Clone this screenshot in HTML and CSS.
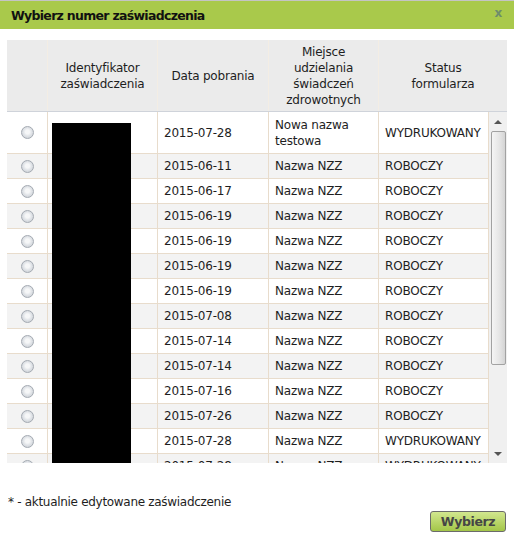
FILE: index.html
```html
<!DOCTYPE html>
<html lang="pl">
<head>
<meta charset="utf-8">
<title>Wybierz numer zaświadczenia</title>
<link rel="stylesheet" href="styles.css">
</head>
<body>
<div class="dialog">
  <div class="titlebar">
    <span class="title">Wybierz numer zaświadczenia</span>
    <span class="close">x</span>
  </div>
  <div class="content">
    <div class="head">
      <div class="h"></div>
      <div class="h">Identyfikator<br>zaświadczenia</div>
      <div class="h">Data pobrania</div>
      <div class="h">Miejsce<br>udzielania<br>świadczeń<br>zdrowotnych</div>
      <div class="h">Status<br>formularza</div>
    </div>
    <div class="body">
      <div class="clip">
        <div class="row first"><div><span class="radio"></span></div><div></div><div>2015-07-28</div><div>Nowa nazwa<br>testowa</div><div>WYDRUKOWANY</div></div>
        <div class="row alt"><div><span class="radio"></span></div><div></div><div>2015-06-11</div><div>Nazwa NZZ</div><div>ROBOCZY</div></div>
        <div class="row"><div><span class="radio"></span></div><div></div><div>2015-06-17</div><div>Nazwa NZZ</div><div>ROBOCZY</div></div>
        <div class="row alt"><div><span class="radio"></span></div><div></div><div>2015-06-19</div><div>Nazwa NZZ</div><div>ROBOCZY</div></div>
        <div class="row"><div><span class="radio"></span></div><div></div><div>2015-06-19</div><div>Nazwa NZZ</div><div>ROBOCZY</div></div>
        <div class="row alt"><div><span class="radio"></span></div><div></div><div>2015-06-19</div><div>Nazwa NZZ</div><div>ROBOCZY</div></div>
        <div class="row"><div><span class="radio"></span></div><div></div><div>2015-06-19</div><div>Nazwa NZZ</div><div>ROBOCZY</div></div>
        <div class="row alt"><div><span class="radio"></span></div><div></div><div>2015-07-08</div><div>Nazwa NZZ</div><div>ROBOCZY</div></div>
        <div class="row"><div><span class="radio"></span></div><div></div><div>2015-07-14</div><div>Nazwa NZZ</div><div>ROBOCZY</div></div>
        <div class="row alt"><div><span class="radio"></span></div><div></div><div>2015-07-14</div><div>Nazwa NZZ</div><div>ROBOCZY</div></div>
        <div class="row"><div><span class="radio"></span></div><div></div><div>2015-07-16</div><div>Nazwa NZZ</div><div>ROBOCZY</div></div>
        <div class="row alt"><div><span class="radio"></span></div><div></div><div>2015-07-26</div><div>Nazwa NZZ</div><div>ROBOCZY</div></div>
        <div class="row"><div><span class="radio"></span></div><div></div><div>2015-07-28</div><div>Nazwa NZZ</div><div>WYDRUKOWANY</div></div>
        <div class="row alt"><div><span class="radio"></span></div><div></div><div>2015-07-28</div><div>Nazwa NZZ</div><div>WYDRUKOWANY</div></div>
        <div class="redact"></div>
      </div>
      <div class="scrollbar">
        <div class="arrow"><span class="tri up"></span></div>
        <div class="thumb"></div>
        <div class="spacer"></div>
        <div class="arrow"><span class="tri down"></span></div>
      </div>
    </div>
    <p class="note">* - aktualnie edytowane zaświadczenie</p>
    <div class="actions"><button class="btn" type="button">Wybierz</button></div>
  </div>
</div>
</body>
</html>
```
FILE: styles.css
```css
* { box-sizing: border-box; }
body {
  margin: 0;
  background: #fff;
  font-family: "DejaVu Sans", Verdana, sans-serif;
  font-size: 12px;
  letter-spacing: -0.2px;
  color: #1e1e1e;
}
.titlebar {
  display: flex;
  justify-content: space-between;
  align-items: center;
  height: 29px;
  border-top: 1px solid #c4c4c4;
  background: #a9c94b;
  padding: 0 12px 0 11px;
}
.title {
  font-weight: bold;
  font-size: 12.5px;
  color: #111;
  letter-spacing: -0.7px;
}
.close {
  font-weight: bold;
  font-size: 12px;
  color: #6e8d6b;
  margin-top: -4px;
}
.content { padding: 11px 7px 0; }
.head {
  display: grid;
  grid-template-columns: 40px 110px 111px 110px 129px;
  height: 72px;
  background: #ebebeb;
  border-bottom: 1px solid #cfd3da;
}
.head .h {
  display: flex;
  align-items: center;
  justify-content: center;
  text-align: center;
  line-height: 16px;
  border-left: 1px solid #f3ede4;
}
.head .h:first-child { border-left: 0; }
.body { display: flex; height: 351px; }
.clip {
  position: relative;
  width: 482px;
  overflow: hidden;
}
.row {
  display: grid;
  grid-template-columns: 40px 110px 111px 110px 111px;
  height: 25px;
  border-bottom: 1px solid #e8dccc;
}
.row.first { height: 42px; }
.row.alt { background: #f3f3f3; }
.row > div {
  display: flex;
  align-items: center;
  padding-left: 6px;
  line-height: 16px;
  border-left: 1px solid #e8dccc;
}
.row > div:first-child {
  justify-content: center;
  padding-left: 0;
  border-left: 0;
}
.row > div:last-child { border-right: 1px solid #e8dccc; }
.radio {
  width: 13px;
  height: 13px;
  border-radius: 50%;
  border: 1px solid #a4aab2;
  background: radial-gradient(circle at 50% 45%, #f6f7f8 0 2px, #e2e5e9 4px, #d3d7dc 6px);
}
.redact {
  position: absolute;
  left: 45px;
  top: 11px;
  width: 79px;
  bottom: 0;
  background: #000;
}
.scrollbar {
  width: 18px;
  background: #f0f0f0;
  display: flex;
  flex-direction: column;
  align-items: center;
}
.arrow {
  height: 19px;
  width: 100%;
  display: flex;
  align-items: center;
  justify-content: center;
}
.tri {
  width: 0;
  height: 0;
  border-left: 4px solid transparent;
  border-right: 4px solid transparent;
}
.tri.up { border-bottom: 4px solid #555; }
.tri.down { border-top: 4px solid #555; }
.thumb {
  width: 15px;
  height: 234px;
  border: 1px solid #a2a2a2;
  border-radius: 2px;
  background: linear-gradient(to right, #f5f5f5, #e6e6e6 55%, #d4d4d4);
}
.spacer { flex: 1; }
.note {
  margin: 31px 0 0 1px;
  line-height: 16px;
  letter-spacing: -0.3px;
}
.actions {
  display: flex;
  justify-content: flex-end;
  margin-top: 1px;
  padding-right: 1px;
}
.btn {
  width: 76px;
  height: 21px;
  border: 1px solid #6b6b6b;
  border-radius: 3px;
  background: linear-gradient(#d2e78f, #a3c648);
  font-family: inherit;
  font-weight: bold;
  font-size: 12.5px;
  letter-spacing: -0.4px;
  color: #454545;
  padding: 0;
}
```
